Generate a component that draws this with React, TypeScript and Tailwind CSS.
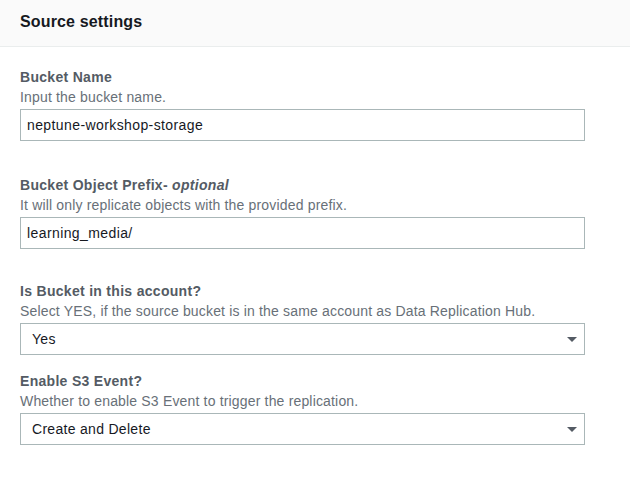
import { ReactNode } from "react";

const Field = ({
  label,
  hint,
  className,
  children,
}: {
  label: ReactNode;
  hint: string;
  className?: string;
  children: ReactNode;
}) => (
  <div className={className}>
    <div className="text-[14px] leading-[20px] font-bold tracking-[0.3px] text-[#545b64]">{label}</div>
    <div className="text-[14px] leading-[20px] tracking-[0.17px] text-[#687078]">{hint}</div>
    <div className="mt-[2px]">{children}</div>
  </div>
);

const TextInput = ({ value }: { value: string }) => (
  <div className="h-[32px] w-[565px] border border-[#aab7b8] bg-white pl-[6px] flex items-center text-[14px] tracking-[0.4px] text-[#16191f]">
    {value}
  </div>
);

const Select = ({ value }: { value: string }) => (
  <div className="h-[32px] w-[565px] border border-[#aab7b8] bg-white pl-[11px] pr-[7px] flex items-center justify-between text-[14px] tracking-[0.3px] text-[#16191f]">
    <span>{value}</span>
    <svg width="10" height="5" viewBox="0 0 10 5">
      <path d="M0 0h10L5 5z" fill="#545b64" />
    </svg>
  </div>
);

export default function App() {
  return (
    <div className="w-[630px] h-[480px] bg-white" style={{ fontFamily: '"Liberation Sans", Arial, sans-serif' }}>
      {/* Kopf */}
      <div className="h-[47px] bg-[#fafafa] border-b border-[#eaeded] px-5 flex items-center">
        <h2 className="text-[16px] font-bold tracking-[0.15px] text-[#16191f] -mt-[2px]">Source settings</h2>
      </div>

      <div className="px-5 pt-5">
        <Field label="Bucket Name" hint="Input the bucket name.">
          <TextInput value="neptune-workshop-storage" />
        </Field>

        <Field
          className="mt-[34px]"
          label={
            <>
              Bucket Object Prefix- <i>optional</i>
            </>
          }
          hint="It will only replicate objects with the provided prefix."
        >
          <TextInput value="learning_media/" />
        </Field>

        <Field
          className="mt-[32px]"
          label="Is Bucket in this account?"
          hint="Select YES, if the source bucket is in the same account as Data Replication Hub."
        >
          <Select value="Yes" />
        </Field>

        <Field
          className="mt-4"
          label="Enable S3 Event?"
          hint="Whether to enable S3 Event to trigger the replication."
        >
          <Select value="Create and Delete" />
        </Field>
      </div>
    </div>
  );
}
